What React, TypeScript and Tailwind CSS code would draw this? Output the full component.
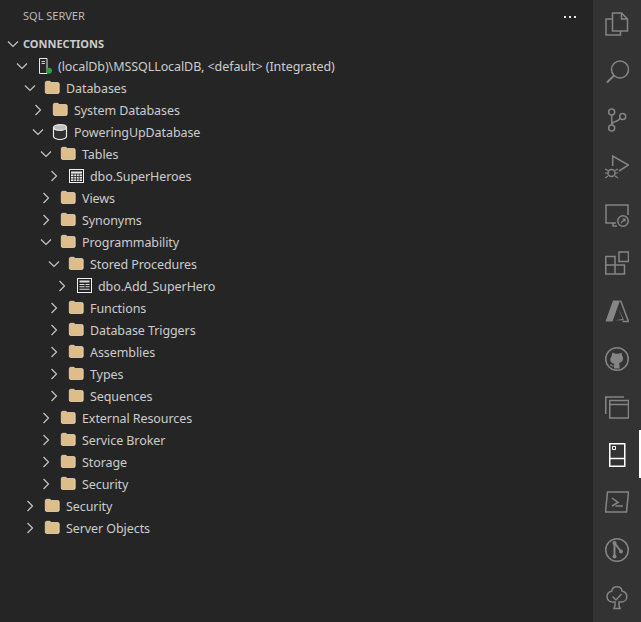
import type { ReactNode } from "react";

type Kind = "folder" | "server" | "db" | "table" | "proc";
type Row = { depth: number; label: string; icon: Kind; open?: boolean };

const ROWS: Row[] = [
  { depth: 1, label: "(localDb)\\MSSQLLocalDB, <default> (Integrated)", icon: "server", open: true },
  { depth: 2, label: "Databases", icon: "folder", open: true },
  { depth: 3, label: "System Databases", icon: "folder" },
  { depth: 3, label: "PoweringUpDatabase", icon: "db", open: true },
  { depth: 4, label: "Tables", icon: "folder", open: true },
  { depth: 5, label: "dbo.SuperHeroes", icon: "table" },
  { depth: 4, label: "Views", icon: "folder" },
  { depth: 4, label: "Synonyms", icon: "folder" },
  { depth: 4, label: "Programmability", icon: "folder", open: true },
  { depth: 5, label: "Stored Procedures", icon: "folder", open: true },
  { depth: 6, label: "dbo.Add_SuperHero", icon: "proc" },
  { depth: 5, label: "Functions", icon: "folder" },
  { depth: 5, label: "Database Triggers", icon: "folder" },
  { depth: 5, label: "Assemblies", icon: "folder" },
  { depth: 5, label: "Types", icon: "folder" },
  { depth: 5, label: "Sequences", icon: "folder" },
  { depth: 4, label: "External Resources", icon: "folder" },
  { depth: 4, label: "Service Broker", icon: "folder" },
  { depth: 4, label: "Storage", icon: "folder" },
  { depth: 4, label: "Security", icon: "folder" },
  { depth: 2, label: "Security", icon: "folder" },
  { depth: 2, label: "Server Objects", icon: "folder" },
];

function Chevron({ open }: { open?: boolean }) {
  return (
    <svg width="16" height="16" viewBox="0 0 16 16" fill="none" stroke="#c5c5c5" strokeWidth="1.2" className="shrink-0">
      {open ? <path d="M3 5.500l5 5 5-5" /> : <path d="M5.500 3l5 5-5 5" />}
    </svg>
  );
}

function TreeIcon({ kind }: { kind: Kind }) {
  if (kind === "folder")
    return (
      <svg width="16" height="16" viewBox="0 0 16 16" className="shrink-0">
        <path
          d="M1.300 2.800a1.500 1.500 0 011.500-1.500h3l1.500 1.200h6.400a1.500 1.500 0 011.500 1.500v8a1.500 1.500 0 01-1.500 1.500H2.800a1.500 1.500 0 01-1.500-1.500z"
          fill="#dfbd88"
          stroke="#f3e6d0"
          strokeWidth="0.7"
        />
      </svg>
    );
  if (kind === "server")
    return (
      <svg width="16" height="16" viewBox="0 0 16 16" className="shrink-0">
        <path d="M3.500 .5h7.500v15H3.500z" fill="#252526" stroke="#e8e8e8" />
        <path d="M5.500 3.500h3.500M5.500 5.500h3.500" stroke="#d0d0d0" />
        <circle cx="13" cy="12.700" r="3" fill="#2ea043" />
      </svg>
    );
  if (kind === "db")
    return (
      <svg width="16" height="16" viewBox="0 0 16 16" className="shrink-0">
        <path d="M1.500 3.500v9c0 1.500 2.900 3 6.500 3s6.500-1.500 6.500-3v-9" fill="#2f2f30" stroke="#e8e8e8" strokeWidth="1.200" />
        <ellipse cx="8" cy="3.500" rx="6.500" ry="2.800" fill="#bdbdbd" stroke="#e8e8e8" strokeWidth="1.200" />
      </svg>
    );
  if (kind === "table")
    return (
      <svg width="16" height="16" viewBox="0 0 16 16" className="shrink-0">
        <rect x="1.500" y="1.500" width="14" height="13" fill="#252526" stroke="#f0f0f0" />
        <path d="M3 3.500h11v9.500H3z" fill="#e8e8e8" />
        <path d="M3 6h11M3 8.500h11M3 11h11M5.800 6v7M8.500 6v7M11.200 6v7" stroke="#252526" strokeWidth="0.8" />
      </svg>
    );
  return (
    <svg width="16" height="16" viewBox="0 0 16 16" className="shrink-0">
      <rect x="1.500" y=".5" width="14" height="14" fill="#252526" stroke="#f0f0f0" />
      <path d="M3.500 2.500h10v2h-10zM3.500 6h5v1h-5zM9.500 6h4v1h-4zM3.500 8.300h5v1h-5zM9.500 8.300h4v1h-4zM3.500 10.700h10v1h-10z" fill="#dcdcdc" />
    </svg>
  );
}

function TreeRow({ row }: { row: Row }) {
  return (
    <div className="flex h-[22px] items-center" style={{ paddingLeft: 14 + (row.depth - 1) * 8 }}>
      <Chevron open={row.open} />
      <span className="ml-[6px] flex"><TreeIcon kind={row.icon} /></span>
      <span className="ml-[6px] whitespace-nowrap pt-[2px] text-[12.5px] tracking-[-0.08px] text-[#cccccc]">{row.label}</span>
    </div>
  );
}

function ActivityIcon({ children, active }: { children: ReactNode; active?: boolean }) {
  return (
    <div className={`flex h-12 items-center justify-center ${active ? "text-white" : "text-[#858585]"}`}>
      <svg width="24" height="24" viewBox="0 0 24 24" fill="none" stroke="currentColor" strokeWidth="1.500">
        {children}
      </svg>
    </div>
  );
}

export default function App() {
  return (
    <div className="flex h-[622px] w-[641px] overflow-hidden bg-[#252526] font-['Noto_Sans',sans-serif]">
      <div className="min-w-0 flex-1">
        <div className="flex h-[33px] items-center justify-between pl-[23px] pr-[17px]">
          <span className="text-[11px] text-[#bbbbbb]">SQL SERVER</span>
          <span className="flex gap-[3px]">
            <span className="h-[2px] w-[2px] bg-[#e8e8e8]" />
            <span className="h-[2px] w-[2px] bg-[#e8e8e8]" />
            <span className="h-[2px] w-[2px] bg-[#e8e8e8]" />
          </span>
        </div>
        <div className="flex h-[22px] items-center pl-[5px]">
          <Chevron open />
          <span className="ml-[2px] text-[11px] font-bold text-[#cccccc]">CONNECTIONS</span>
        </div>
        {ROWS.map((row, i) => (
          <TreeRow key={i} row={row} />
        ))}
      </div>
      <div className="relative flex w-[48px] shrink-0 flex-col bg-[#333333]">
        <ActivityIcon>
          <path d="M7.500 1H16.500l6 6v12H7.500zM16.500 1v6h6M7 7H1v16h14.500v-4" />
        </ActivityIcon>
        <ActivityIcon>
          <circle cx="15" cy="9.500" r="8.500" />
          <path d="M9 15.500L2 22.500" strokeWidth="2" />
        </ActivityIcon>
        <ActivityIcon>
          <circle cx="6.700" cy="4" r="3" />
          <circle cx="6.700" cy="20" r="3" />
          <circle cx="17.700" cy="8.500" r="3" />
          <path d="M6.700 7v10M6.700 16c1-3 7-2 8.500-6" />
        </ActivityIcon>
        <ActivityIcon>
          <path d="M7.700 11V1L23.500 10 14 16" />
          <circle cx="6.500" cy="18" r="3.500" />
          <path d="M0 14l3 1.500M13 14l-3 1.500M0 18h3M13 18h-3M0 23l3-2M13 23l-3-2" strokeWidth="1.200" />
        </ActivityIcon>
        <ActivityIcon>
          <path d="M11 20H1V2h22v10M8 20v3h4" />
          <circle cx="18" cy="18" r="5.250" />
          <path d="M16 20l4-4M17.500 16H20v2.500" strokeWidth="1.100" />
        </ActivityIcon>
        <ActivityIcon>
          <path d="M.75 5.500h9.250v8.500h9.500v9H.75zM.75 14h9.250v9" />
          <rect x="14" y="1" width="9.500" height="9.500" />
        </ActivityIcon>
        <ActivityIcon>
          <path d="M8 1.500h7L7.500 22.500H.5z" fill="currentColor" stroke="none" />
          <path d="M13 8.500l4.500 11.500-7 1.200h8.500z" fill="currentColor" stroke="none" />
          <path d="M15.500 1.500l8 21h-6" />
        </ActivityIcon>
        <ActivityIcon>
          <circle cx="12" cy="12" r="11.250" />
          <path
            d="M7.500 5.500l2.700 1.200h3.600l2.700-1.200.5 3c.7.8 1.100 1.800 1.100 3 0 2.600-1.700 4.200-4.300 4.500.5.500.7 1.200.7 2v3.500h-5.500v-2.200c-2.500.5-3.700-.5-4.300-2.300l1.800.6c.6 1 1.400 1 2.500.7 0-.6.200-1.100.6-1.300-2.600-.3-4.300-1.900-4.300-4.500 0-1.200.4-2.200 1.100-3z"
            fill="currentColor"
            stroke="none"
          />
        </ActivityIcon>
        <ActivityIcon>
          <path d="M.75 19V2H19" />
          <path d="M4.750 5.500h18.750V23H4.750zM4.750 9.500h18.750" />
        </ActivityIcon>
        <ActivityIcon active>
          <path d="M4.750 .75h15v22.500h-15zM4.750 15.500h15" />
          <path d="M7.500 3.500h3v3h-3z" strokeWidth="1" />
        </ActivityIcon>
        <ActivityIcon>
          <path d="M2.500 2H23.500L21.500 22H.5zM7 8l6 4.500-6 3.500M10.500 16h7.500" />
        </ActivityIcon>
        <ActivityIcon>
          <circle cx="12" cy="12" r="11.250" />
          <circle cx="9.500" cy="5" r="2" fill="currentColor" stroke="none" />
          <circle cx="9.500" cy="18.500" r="2" fill="currentColor" stroke="none" />
          <circle cx="16" cy="13.500" r="2" fill="currentColor" stroke="none" />
          <path d="M9.500 5v13.500M9.500 5l6.500 8.500" strokeWidth="2" />
        </ActivityIcon>
        <ActivityIcon>
          <path d="M12 .75c2.800 0 4.800 1.700 5 4.300 2.800.7 4.800 3 4.800 5.700 0 3-2.400 5.300-5.500 5.300h-2.300v3.500l1 2.900H9l1-2.900v-3.500H7.500c-3.100 0-5.500-2.300-5.500-5.300 0-2.700 2-5 4.800-5.700.2-2.600 2.200-4.300 5.200-4.300z" />
          <path d="M7.500 10.500l3.500 3.500 5.500-6" />
        </ActivityIcon>
        <div className="absolute left-[46px] top-[430px] h-[48px] w-[2px] bg-white" />
      </div>
    </div>
  );
}
